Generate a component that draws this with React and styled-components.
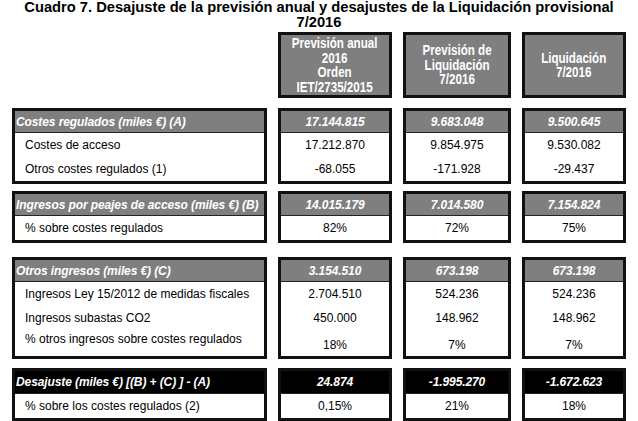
import React from "react";
import styled, { createGlobalStyle } from "styled-components";

const GlobalStyle = createGlobalStyle`
  html, body { margin: 0; padding: 0; background: #fff; }
  body { font-family: "Liberation Sans", Arial, sans-serif; color: #000; }
`;

const COLS = "255px 114px 108px 104px";

const Page = styled.div`
  width: 638px;
  height: 421px;
  overflow: hidden;
  background: #fff;
`;

const Title = styled.h1`
  margin: 0;
  height: 32px;
  text-align: center;
  font-family: "Liberation Sans", Arial, sans-serif;
  font-weight: bold;
  font-size: 14.7px;
  line-height: 15px;
  color: #000;
`;

const Grid = styled.div`
  display: grid;
  grid-template-columns: ${COLS};
  column-gap: 11px;
  margin-left: 12px;
  margin-top: ${(p) => p.$top || 0}px;
`;

const HeadBox = styled.div`
  height: 60px;
  border: 3px solid #111;
  background: #7f7f7f;
  color: #fff;
  display: flex;
  align-items: center;
  justify-content: center;
  text-align: center;
`;

const HeadText = styled.span`
  display: inline-block;
  font-family: "Liberation Sans", Arial, sans-serif;
  font-weight: bold;
  font-size: 14.5px;
  line-height: 14.5px;
  white-space: nowrap;
  transform: scaleX(0.8);
`;

const Box = styled.div`
  border: 3px solid #111;
  background: #fff;
  display: flex;
  flex-direction: column;
`;

const BoxHead = styled.div`
  height: ${(p) => (p.$dark ? 23 : 22)}px;
  box-sizing: border-box;
  background: ${(p) => (p.$dark ? "#000" : "#7f7f7f")};
  border-bottom: 1px solid #222;
  color: #fff;
  display: flex;
  align-items: center;
  justify-content: ${(p) => (p.$label ? "flex-start" : "center")};
  padding-left: ${(p) => (p.$label ? 1 : 0)}px;
  font-weight: bold;
  font-style: italic;
  font-size: 12px;
  letter-spacing: -0.1px;
  white-space: nowrap;
`;

const Row = styled.div`
  height: ${(p) => p.$h || 24}px;
  display: flex;
  align-items: ${(p) => p.$align || "center"};
  justify-content: ${(p) => (p.$label ? "flex-start" : "center")};
  padding-left: ${(p) => (p.$label ? 10 : 0)}px;
  padding-top: ${(p) => p.$pt || 0}px;
  padding-bottom: ${(p) => p.$pb || 0}px;
  box-sizing: border-box;
  font-size: 12px;
  white-space: nowrap;
`;

const sections = [
  {
    top: 10,
    head: ["Costes regulados (miles €) (A)", "17.144.815", "9.683.048", "9.500.645"],
    rows: [
      ["Costes de acceso", "17.212.870", "9.854.975", "9.530.082"],
      ["Otros costes regulados (1)", "-68.055", "-171.928", "-29.437"],
    ],
  },
  {
    top: 7,
    head: ["Ingresos por peajes de acceso (miles €) (B)", "14.015.179", "7.014.580", "7.154.824"],
    rows: [["% sobre costes regulados", "82%", "72%", "75%"]],
  },
  {
    top: 14,
    head: ["Otros ingresos (miles €) (C)", "3.154.510", "673.198", "673.198"],
    rows: [
      ["Ingresos Ley 15/2012 de medidas fiscales", "2.704.510", "524.236", "524.236"],
      ["Ingresos subastas CO2", "450.000", "148.962", "148.962"],
      ["% otros ingresos sobre costes regulados", "18%", "7%", "7%"],
    ],
    tall: true,
  },
  {
    top: 9,
    dark: true,
    head: ["Desajuste (miles €) [(B) + (C) ] - (A)", "24.874", "-1.995.270", "-1.672.623"],
    rows: [["% sobre los costes regulados (2)", "0,15%", "21%", "18%"]],
  },
];

function Section({ data }) {
  return (
    <Grid $top={data.top}>
      {[0, 1, 2, 3].map((c) => (
        <Box key={c}>
          <BoxHead $dark={data.dark} $label={c === 0}>
            {data.head[c]}
          </BoxHead>
          {data.rows.map((r, i) => {
            const last = data.tall && i === data.rows.length - 1;
            return (
              <Row
                key={i}
                $label={c === 0}
                $h={last ? 26 : 24}
                $align={last ? (c === 0 ? "flex-start" : "flex-end") : "center"}
                $pt={last && c === 0 ? 2 : 0}
                $pb={last && c !== 0 ? 4 : 0}
              >
                {r[c]}
              </Row>
            );
          })}
        </Box>
      ))}
    </Grid>
  );
}

export default function App() {
  return (
    <Page>
      <GlobalStyle />
      <Title>
        Cuadro 7. Desajuste de la previsión anual y desajustes de la Liquidación provisional
        <br />
        7/2016
      </Title>
      <Grid>
        <div />
        <HeadBox>
          <HeadText>
            Previsión anual
            <br />
            2016
            <br />
            Orden
            <br />
            IET/2735/2015
          </HeadText>
        </HeadBox>
        <HeadBox>
          <HeadText>
            Previsión de
            <br />
            Liquidación
            <br />
            7/2016
          </HeadText>
        </HeadBox>
        <HeadBox>
          <HeadText>
            Liquidación
            <br />
            7/2016
          </HeadText>
        </HeadBox>
      </Grid>
      {sections.map((s, i) => (
        <Section key={i} data={s} />
      ))}
    </Page>
  );
}
